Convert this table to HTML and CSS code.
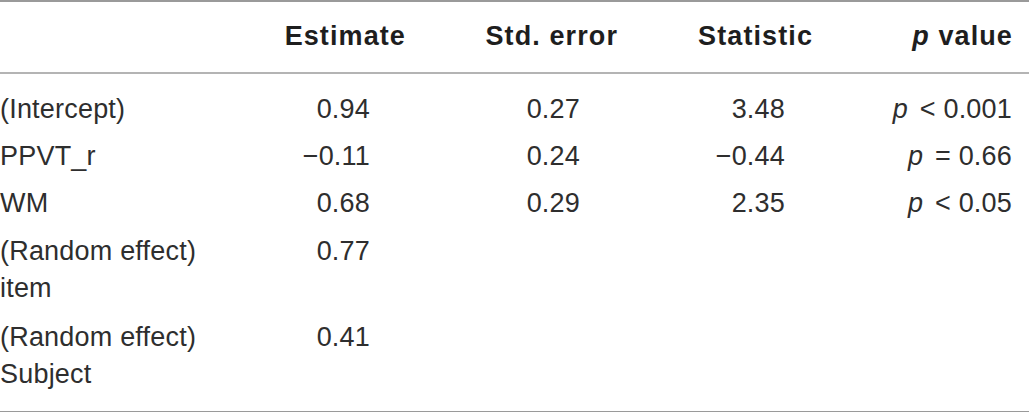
FILE: index.html
```html
<!DOCTYPE html>
<html lang="en">
<head>
<meta charset="utf-8">
<title>Model estimates</title>
<link rel="stylesheet" href="styles.css">
</head>
<body>
<table class="stats">
  <colgroup>
    <col class="c-label">
    <col class="c-est">
    <col class="c-se">
    <col class="c-stat">
    <col class="c-p">
  </colgroup>
  <thead>
    <tr>
      <th class="h-label"></th>
      <th class="h-est">Estimate</th>
      <th class="h-se">Std. error</th>
      <th class="h-stat">Statistic</th>
      <th class="h-p"><i>p</i> value</th>
    </tr>
  </thead>
  <tbody>
    <tr class="first">
      <td class="label">(Intercept)</td>
      <td class="est">0.94</td>
      <td class="se">0.27</td>
      <td class="stat">3.48</td>
      <td class="p"><i>p</i> &lt; 0.001</td>
    </tr>
    <tr>
      <td class="label">PPVT_r</td>
      <td class="est">−0.11</td>
      <td class="se">0.24</td>
      <td class="stat">−0.44</td>
      <td class="p"><i>p</i> = 0.66</td>
    </tr>
    <tr>
      <td class="label">WM</td>
      <td class="est">0.68</td>
      <td class="se">0.29</td>
      <td class="stat">2.35</td>
      <td class="p"><i>p</i> &lt; 0.05</td>
    </tr>
    <tr class="double">
      <td class="label">(Random effect)<br>item</td>
      <td class="est">0.77</td>
      <td class="se"></td>
      <td class="stat"></td>
      <td class="p"></td>
    </tr>
    <tr class="double last">
      <td class="label">(Random effect)<br>Subject</td>
      <td class="est">0.41</td>
      <td class="se"></td>
      <td class="stat"></td>
      <td class="p"></td>
    </tr>
  </tbody>
</table>
</body>
</html>
```

FILE: styles.css
```css
html, body {
  margin: 0;
  padding: 0;
  background: #ffffff;
}

body {
  font-family: "Liberation Sans", Arial, Helvetica, sans-serif;
  color: #2e2e2e;
  font-size: 27px;
  line-height: 37px;
}

.stats {
  width: 1029px;
  border-collapse: collapse;
  table-layout: fixed;
  border-top: 2px solid #9a9a9a;
  border-bottom: 2px solid #9a9a9a;
}

.c-label { width: 280px; }
.c-est { width: 140px; }
.c-se { width: 212px; }
.c-stat { width: 195px; }
.c-p { width: 202px; }

.stats thead th {
  font-weight: bold;
  color: #1e1e1e;
  text-align: right;
  letter-spacing: 1.1px;
  padding: 16px 14px 17px 0;
  border-bottom: 2px solid #b4b4b4;
  white-space: nowrap;
}

.stats thead th.h-p { padding-right: 16px; }

.stats td {
  padding: 5px 0;
  vertical-align: top;
  text-align: right;
  white-space: nowrap;
  letter-spacing: 0.2px;
}

.stats td.label { text-align: left; padding-left: 0; }
.stats td.est { padding-right: 50px; }
.stats td.se { padding-right: 52px; }
.stats td.stat { padding-right: 42px; }
.stats td.p { padding-right: 17px; }

.stats tr.first td { padding-top: 17px; }
.stats tr.double td { padding-top: 6px; padding-bottom: 6px; }
.stats tr.last td { padding-bottom: 18px; }

.stats i { font-style: italic; }
.stats td.p i { margin-right: 4px; }
```
